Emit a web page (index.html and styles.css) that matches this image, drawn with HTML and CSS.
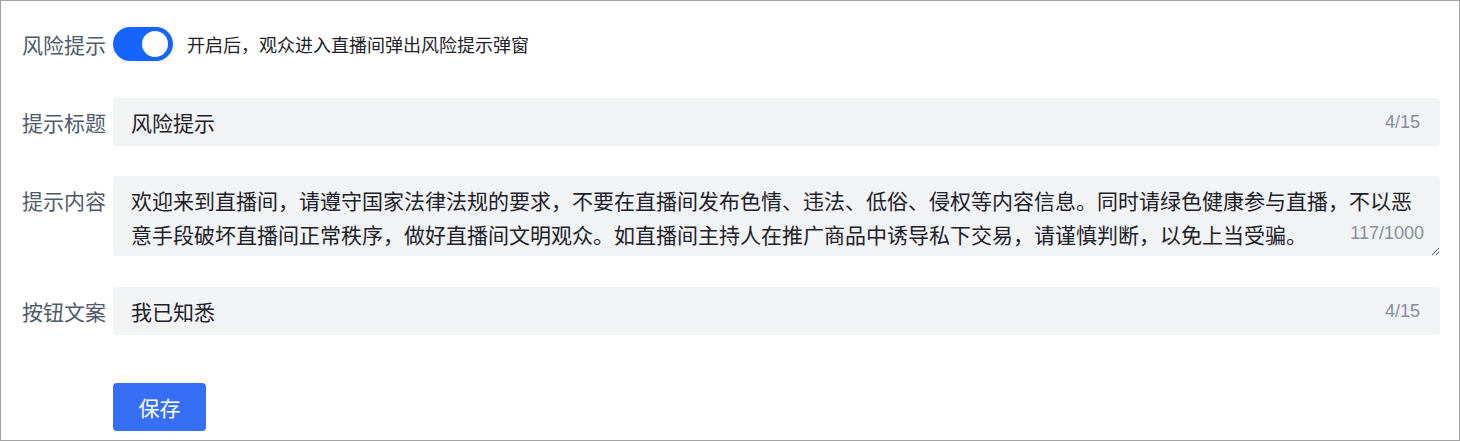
FILE: index.html
```html
<!DOCTYPE html>
<html lang="zh-CN">
<head>
<meta charset="utf-8">
<title>风险提示设置</title>
<link rel="stylesheet" href="styles.css">
</head>
<body>
<div class="page">
  <form class="form" onsubmit="return false">
    <div class="row row-switch">
      <label class="label">风险提示</label>
      <div class="control inline">
        <span class="switch is-on"><span class="knob"></span></span>
        <span class="hint">开启后，观众进入直播间弹出风险提示弹窗</span>
      </div>
    </div>
    <div class="row">
      <label class="label">提示标题</label>
      <div class="control field">
        <input class="input" type="text" value="风险提示">
        <span class="count">4/15</span>
      </div>
    </div>
    <div class="row row-top">
      <label class="label label-top">提示内容</label>
      <div class="control field">
        <textarea class="textarea">欢迎来到直播间，请遵守国家法律法规的要求，不要在直播间发布色情、违法、低俗、侵权等内容信息。同时请绿色健康参与直播，不以恶意手段破坏直播间正常秩序，做好直播间文明观众。如直播间主持人在推广商品中诱导私下交易，请谨慎判断，以免上当受骗。</textarea>
        <span class="count count-area">117/1000</span>
      </div>
    </div>
    <div class="row row-last">
      <label class="label">按钮文案</label>
      <div class="control field">
        <input class="input" type="text" value="我已知悉">
        <span class="count">4/15</span>
      </div>
    </div>
    <div class="row">
      <span class="label"></span>
      <div class="control">
        <button class="btn" type="submit">保存</button>
      </div>
    </div>
  </form>
</div>
</body>
</html>
```

FILE: styles.css
```css
* { box-sizing: border-box; }
html, body { margin: 0; padding: 0; background: #fff; }
body {
  font-family: "Noto Sans CJK SC", "Microsoft YaHei", sans-serif;
  color: #1d2129;
}
.page {
  width: 1460px;
  height: 441px;
  border: 1px solid #a3a3a3;
  padding: 19px 19px 0 21px;
  overflow: hidden;
}
.form {
  display: flex;
  flex-direction: column;
  gap: 30px;
}
.row {
  display: flex;
  align-items: center;
  gap: 7px;
}
.row-top { align-items: flex-start; }
.row-last { margin-top: 1px; margin-bottom: 18px; }
.label {
  width: 84px;
  flex: none;
  font-size: 21px;
  line-height: 30px;
  color: #505a6b;
  white-space: nowrap;
}
.label-top { padding-top: 9px; }
.control { flex: 1; min-width: 0; }
.inline {
  display: flex;
  align-items: center;
  gap: 14px;
  height: 48px;
}
.switch {
  position: relative;
  width: 60px;
  height: 34px;
  border-radius: 17px;
  background: #1664ff;
  flex: none;
}
.switch .knob {
  position: absolute;
  top: 4px;
  right: 5px;
  width: 26px;
  height: 26px;
  border-radius: 50%;
  background: #fff;
}
.hint {
  font-size: 18px;
  color: #1d2129;
}
.field { position: relative; }
.input {
  display: block;
  width: 100%;
  height: 48px;
  border: 0;
  border-radius: 4px;
  background: #f2f3f5;
  padding: 0 80px 0 18px;
  font-family: inherit;
  font-size: 21px;
  color: #1d2129;
  outline: none;
}
.textarea {
  display: block;
  width: 100%;
  height: 80px;
  border: 0;
  border-radius: 4px;
  background: #f2f3f5;
  padding: 7px 18px 6px 18px;
  font-family: inherit;
  font-size: 21px;
  line-height: 34px;
  color: #1d2129;
  resize: vertical;
  outline: none;
  overflow: hidden;
}
.count {
  position: absolute;
  right: 20px;
  top: 50%;
  transform: translateY(-50%);
  font-family: "Liberation Sans", Arial, sans-serif;
  font-size: 18px;
  color: #86909c;
}
.count-area {
  top: auto;
  bottom: 12px;
  right: 16px;
  transform: none;
}
.btn {
  display: block;
  width: 93px;
  height: 48px;
  border: 0;
  border-radius: 4px;
  background: #366ef4;
  color: #fff;
  font-family: inherit;
  font-size: 21px;
  cursor: pointer;
}
```
